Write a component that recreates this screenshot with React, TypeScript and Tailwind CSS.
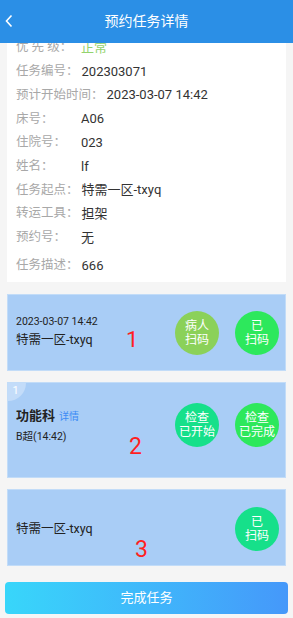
const font = { fontFamily: 'Roboto, "Noto Sans CJK SC", sans-serif' };

const rows: { label: string; value: string; tall?: boolean }[] = [
  { label: "任务编号：", value: "202303071" },
  { label: "预计开始时间：", value: "2023-03-07 14:42" },
  { label: "床号：", value: "A06" },
  { label: "住院号：", value: "023" },
  { label: "姓名：", value: "lf" },
  { label: "任务起点：", value: "特需一区-txyq" },
  { label: "转运工具：", value: "担架" },
  { label: "预约号：", value: "无" },
  { label: "任务描述：", value: "666", tall: true },
];

const Circle = ({ lines, color }: { lines: string[]; color: string }) => (
  <div
    className={`w-[44px] h-[44px] rounded-full flex flex-col items-center justify-center text-white text-[12px] leading-[14px] ${color}`}
  >
    {lines.map((l) => (
      <span key={l}>{l}</span>
    ))}
  </div>
);

export default function App() {
  return (
    <div className="w-[293px] h-[618px] flex flex-col bg-[#f5f5f5] overflow-hidden" style={font}>
      <header className="relative z-10 h-[43px] shrink-0 bg-[#2b8fe6] flex items-center justify-center">
        <svg className="absolute left-[4px] top-[14px]" width="10" height="14" viewBox="0 0 10 14">
          <polyline points="7.5,1.5 2.5,7 7.5,12.5" fill="none" stroke="white" strokeWidth="1.6" />
        </svg>
        <h1 className="text-white text-[14px]">预约任务详情</h1>
      </header>

      <div className="flex-1 flex flex-col overflow-hidden">
        <div className="mx-[7px] -mt-[14px] bg-white pt-[7px] pb-[3px] px-[9px]">
          <div className="h-[23.7px] flex items-center text-[13px]">
            <span className="w-[65px] text-[12.5px] text-[#a8a8a8] whitespace-pre">优 先 级：</span>
            <span className="text-[#93d36d]">正常</span>
          </div>
          {rows.map((r) => (
            <div
              key={r.label}
              className={`${r.tall ? "h-[30px] pt-[3px]" : "h-[23.7px]"} flex items-center text-[13px]`}
            >
              <span className="min-w-[65px] pr-[3px] text-[12.5px] text-[#a8a8a8] whitespace-nowrap">{r.label}</span>
              <span className="text-[#333]">{r.value}</span>
            </div>
          ))}
        </div>

        <div className="relative mt-[12px] mx-[7px] h-[77px] bg-[#a9cdf6] border border-[#c2dcf8] flex items-center justify-between pl-[8px] pr-[6px]">
          <div className="flex flex-col text-[#222]">
            <span className="text-[10.5px] leading-[14px]">2023-03-07 14:42</span>
            <span className="text-[12.5px] leading-[22px]">特需一区-txyq</span>
          </div>
          <div className="flex gap-[16px]">
            <Circle lines={["病人", "扫码"]} color="bg-[#8bd159]" />
            <Circle lines={["已", "扫码"]} color="bg-[#2de85c]" />
          </div>
          <span className="absolute left-[118px] top-[34px] text-[#ff1f1f] text-[22px] leading-none">1</span>
        </div>

        <div className="relative mt-[11px] mx-[7px] h-[96px] bg-[#a9cdf6] border border-[#c2dcf8] flex items-center justify-between pl-[8px] pr-[6px] pb-[10px]">
          <div className="absolute left-0 top-0 w-[18px] h-[18px] rounded-br-full bg-white/30 flex items-center justify-center pr-[3px] pb-[2px]">
            <span className="text-white text-[11px]">1</span>
          </div>
          <div className="flex flex-col text-[#222] pt-[4px]">
            <div className="flex items-baseline gap-[4px]">
              <span className="text-[13px] font-bold">功能科</span>
              <span className="text-[10px] text-[#3b8bf5]">详情</span>
            </div>
            <span className="text-[10.5px] leading-[22px]">B超(14:42)</span>
          </div>
          <div className="flex gap-[16px]">
            <Circle lines={["检查", "已开始"]} color="bg-[#16e08a]" />
            <Circle lines={["检查", "已完成"]} color="bg-[#2de85c]" />
          </div>
          <span className="absolute left-[121px] top-[52px] text-[#ff1f1f] text-[23px] leading-none">2</span>
        </div>

        <div className="relative mt-[11px] mx-[7px] h-[77px] bg-[#a9cdf6] border border-[#c2dcf8] flex items-center justify-between pl-[8px] pr-[6px] pt-[3px]">
          <span className="text-[12.5px] text-[#222]">特需一区-txyq</span>
          <Circle lines={["已", "扫码"]} color="bg-[#16e08a]" />
          <span className="absolute left-[127px] top-[48px] text-[#ff1f1f] text-[23px] leading-none">3</span>
        </div>

        <button className="mt-[16px] mx-[5px] h-[32px] rounded-[4px] bg-gradient-to-r from-[#38d6fa] to-[#4598fa] text-white text-[13px]">
          完成任务
        </button>
      </div>
    </div>
  );
}
